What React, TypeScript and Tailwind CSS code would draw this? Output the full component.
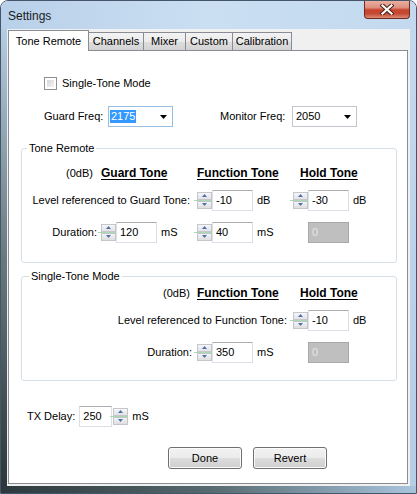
import type { ReactNode } from "react";

const font = { fontFamily: '"Liberation Sans", Arial, sans-serif' };

function Spinner() {
  return (
    <div className="relative flex h-[18px] w-[15px] shrink-0 flex-col gap-[1px]">
      <div className="flex h-[8px] items-center justify-center border border-[#c3c6cc] bg-gradient-to-b from-[#f7f7f7] to-[#e3e3e3]">
        <svg width="5" height="3" viewBox="0 0 5 3">
          <path d="M0 3 L2.5 0 L5 3 Z" fill="#4c6db3" />
        </svg>
      </div>
      <div className="flex h-[8px] items-center justify-center border border-[#c3c6cc] bg-gradient-to-b from-[#f4f4f4] to-[#dedede]">
        <svg width="5" height="3" viewBox="0 0 5 3">
          <path d="M0 0 L5 0 L2.5 3 Z" fill="#4c6db3" />
        </svg>
      </div>
      <span className="absolute -left-[3px] right-0 top-[8px] h-[1px] bg-[#a9d8b2]" />
    </div>
  );
}

function TextBox({ value, width = "w-[41px]" }: { value: string; width?: string }) {
  return (
    <div
      className={`${width} flex h-[21px] shrink-0 items-center border border-[#dbdfe6] border-t-[#abadb3] bg-white pl-[3px]`}
    >
      {value}
    </div>
  );
}

function DisabledBox() {
  return (
    <div className="ml-[15px] flex h-[21px] w-[41px] items-center border border-[#a9a9a9] bg-[#bfbfbf] pl-[3px] text-[#e4e4e4]">
      0
    </div>
  );
}

function SpinField({ value, unit }: { value: string; unit: string }) {
  return (
    <div className="flex items-center">
      <Spinner />
      <TextBox value={value} />
      <span className="ml-[4px]">{unit}</span>
    </div>
  );
}

function Header({ children, className = "" }: { children: ReactNode; className?: string }) {
  return (
    <span className={`text-[12px] leading-[13px] font-bold underline underline-offset-[2px] ${className}`}>
      {children}
    </span>
  );
}

function Group({
  title,
  legendClass,
  bodyClass,
  children,
}: {
  title: string;
  legendClass: string;
  bodyClass: string;
  children: ReactNode;
}) {
  return (
    <fieldset className="ml-[12px] w-[376px] rounded-[3px] border border-[#d5dfe5]">
      <legend className={`px-[2px] leading-[13px] ${legendClass}`}>{title}</legend>
      <div className={`grid grid-cols-[79px_96px_96px_1fr] items-center ${bodyClass}`}>{children}</div>
    </fieldset>
  );
}

function ComboBox({ value, focused }: { value: string; focused?: boolean }) {
  return (
    <div
      className={`flex h-[21px] w-[65px] items-center justify-between border bg-white pl-[1px] pr-[5px] ${
        focused ? "border-[#98bde3]" : "border-[#c2c5cc]"
      }`}
    >
      <span className={focused ? "bg-[#3399ff] px-[1px] leading-[13px] text-white" : "pl-[2px]"}>{value}</span>
      <svg width="7" height="4" viewBox="0 0 7 4">
        <path d="M0 0 L7 0 L3.5 4 Z" fill="#000" />
      </svg>
    </div>
  );
}

function WinButton({ label }: { label: string }) {
  return (
    <div className="flex h-[22px] w-[74px] items-center justify-center rounded-[3px] border border-[#707070] bg-[linear-gradient(to_bottom,#f2f2f2_0%,#ebebeb_50%,#dddddd_50%,#cfcfcf_100%)] shadow-[inset_0_0_0_1px_#fbfbfb]">
      {label}
    </div>
  );
}

const tabs = [
  { label: "Channels", w: "w-[56px]" },
  { label: "Mixer", w: "w-[43px]" },
  { label: "Custom", w: "w-[48px]" },
  { label: "Calibration", w: "w-[60px]" },
];

export default function App() {
  return (
    <div
      className="flex h-[494px] w-[417px] flex-col overflow-hidden rounded-t-[8px] border border-[#46566a] text-[11px] leading-[13px] text-black"
      style={font}
    >
      {/* title bar */}
      <div className="flex h-[28px] shrink-0 items-start bg-gradient-to-r from-[#b8d0e9] via-[#cadff2] to-[#c2d9ef]">
        <span className="mt-[8px] ml-[7px] text-[12px] leading-[14px] text-[#1b1b1b]">Settings</span>
        <div className="mr-[6px] ml-auto flex h-[18px] w-[46px] items-center justify-center rounded-b-[4px] border border-t-0 border-[#6e2b22] bg-[linear-gradient(to_bottom,#eab0a2_0%,#dd8d7c_40%,#c8432c_52%,#c34a35_75%,#de8b73_100%)]">
          <svg width="14" height="11" viewBox="0 0 14 11">
            <path d="M2.5 1.5 L11.5 9.5 M11.5 1.5 L2.5 9.5" stroke="#4a2018" strokeWidth="4.2" strokeLinecap="square" />
            <path d="M2.5 1.5 L11.5 9.5 M11.5 1.5 L2.5 9.5" stroke="#ffffff" strokeWidth="2.2" strokeLinecap="square" />
          </svg>
        </div>
      </div>

      <div className="flex flex-1">
        <div className="w-[6px] bg-gradient-to-b from-[#b5cde3] via-[#697a7e] to-[#2c383c]" />

        {/* client */}
        <div className="flex w-[403px] flex-col bg-[#f0f0f0]">
          <div className="flex h-[21px] shrink-0 items-end pl-[1px]">
            <div className="relative z-10 -mb-[1px] flex h-[21px] w-[81px] items-center justify-center border border-b-0 border-[#898c95] bg-white">
              Tone Remote
            </div>
            {tabs.map((t) => (
              <div
                key={t.label}
                className={`${t.w} -ml-[1px] flex h-[18px] items-center justify-center border border-b-0 border-[#898c95] bg-[linear-gradient(to_bottom,#f3f3f3_0%,#ebebeb_50%,#dedede_50%,#d3d3d3_100%)]`}
              >
                {t.label}
              </div>
            ))}
          </div>

          {/* tab page */}
          <div className="mr-[2px] mb-[2px] ml-[1px] flex flex-1 flex-col border border-[#898c95] bg-white">
            <label className="mt-[26px] ml-[35px] flex items-center gap-[5px]">
              <span className="h-[13px] w-[13px] border border-[#8f8f8f] bg-white p-[2px]">
                <span className="block h-full w-full bg-gradient-to-br from-[#d6d6d6] to-[#f4f4f4]" />
              </span>
              Single-Tone Mode
            </label>

            <div className="mt-[16px] ml-[35px] flex items-center">
              <span className="w-[64px]">Guard Freq:</span>
              <ComboBox value="2175" focused />
              <span className="ml-[47px] w-[72px]">Monitor Freq:</span>
              <ComboBox value="2050" />
            </div>

            <div className="mt-[15px]">
              <Group title="Tone Remote" legendClass="ml-[5px]" bodyClass="pt-[12px] pb-[19px]">
                <span className="pr-[8px] text-right">(0dB)</span>
                <Header>Guard Tone</Header>
                <Header>Function Tone</Header>
                <Header className="pl-[7px]">Hold Tone</Header>

                <span className="col-span-2 mt-[10px] pr-[7px] text-right">Level referenced to Guard Tone:</span>
                <div className="mt-[10px]">
                  <SpinField value="-10" unit="dB" />
                </div>
                <div className="mt-[10px]">
                  <SpinField value="-30" unit="dB" />
                </div>

                <span className="mt-[11px] pr-[4px] text-right">Duration:</span>
                <div className="mt-[11px]">
                  <SpinField value="120" unit="mS" />
                </div>
                <div className="mt-[11px]">
                  <SpinField value="40" unit="mS" />
                </div>
                <div className="mt-[11px]">
                  <DisabledBox />
                </div>
              </Group>
            </div>

            <div className="mt-[7px]">
              <Group title="Single-Tone Mode" legendClass="ml-[7px]" bodyClass="pt-[4px] pb-[17px]">
                <span />
                <span className="pr-[7px] text-right">(0dB)</span>
                <Header>Function Tone</Header>
                <Header className="pl-[7px]">Hold Tone</Header>

                <span className="col-span-3 mt-[10px] pr-[6px] text-right">Level referenced to Function Tone:</span>
                <div className="mt-[10px]">
                  <SpinField value="-10" unit="dB" />
                </div>

                <span className="col-span-2 mt-[11px] pr-[5px] text-right">Duration:</span>
                <div className="mt-[11px]">
                  <SpinField value="350" unit="mS" />
                </div>
                <div className="mt-[11px]">
                  <DisabledBox />
                </div>
              </Group>
            </div>

            <div className="mt-[25px] ml-[18px] flex items-center">
              <span>TX Delay:</span>
              <div className="ml-[4px]">
                <TextBox value="250" width="w-[33px]" />
              </div>
              <div className="ml-[1px]">
                <Spinner />
              </div>
              <span className="ml-[4px]">mS</span>
            </div>

            <div className="mt-[20px] ml-[159px] flex gap-[11px]">
              <WinButton label="Done" />
              <WinButton label="Revert" />
            </div>
          </div>
        </div>

        <div className="w-[6px] bg-gradient-to-b from-[#c3d9ef] to-[#b4cee6]" />
      </div>

      <div className="h-[7px] shrink-0 bg-gradient-to-r from-[#2c383c] via-[#56696f] to-[#a9c5de]" />
    </div>
  );
}
